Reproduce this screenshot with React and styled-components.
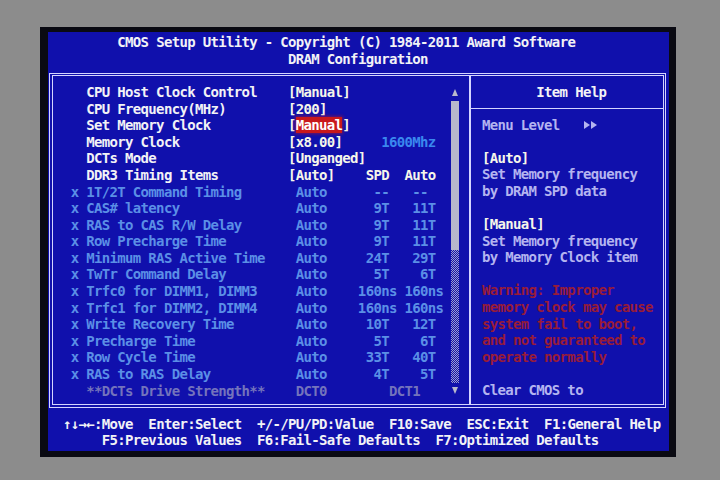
import React from 'react';
import styled, { createGlobalStyle } from 'styled-components';

const CW = 7.76;
const RH = 16.58;
const px = (n) => `${n.toFixed(2)}px`;
const cols = (n) => px(n * CW);
const colX = (n) => px(n * CW - 0.5);

const C = {
  page: '#8c8c8c',
  bezel: '#0a0a12',
  blue: '#1010ac',
  line: '#d4d4ff',
  white: '#f2f2f6',
  value: '#f6f6ea',
  off: '#5b8fe6',
  hint: '#3a88ee',
  dim: '#7474bc',
  help: '#b4b4f0',
  warn: '#981c38',
  sel: '#c8181c',
  thumb: '#b8b8cc',
};

const tones = {
  main: C.white,
  off: C.off,
  dim: C.dim,
  help: C.help,
  bright: C.value,
  warn: C.warn,
};

const Global = createGlobalStyle`
  html, body { margin: 0; padding: 0; background: ${C.page}; }
  body { width: 720px; height: 480px; overflow: hidden; }
`;

const Page = styled.div`
  width: 720px;
  height: 480px;
  box-sizing: border-box;
  padding: 27px 0 0 40px;
  background: ${C.page};
`;

const Bezel = styled.div`
  width: 636px;
  height: 430px;
  box-sizing: border-box;
  padding: 5px 7px 6px 8px;
  background: ${C.bezel};
`;

const Screen = styled.div`
  width: 621px;
  height: 419px;
  box-sizing: border-box;
  padding-top: 2.4px;
  background: ${C.blue};
  color: ${C.white};
  font-family: "DejaVu Sans Mono", "Liberation Mono", monospace;
  font-weight: bold;
  font-size: 14px;
  letter-spacing: -0.669px;
  overflow: hidden;
`;

const TextLine = styled.div`
  height: ${px(RH)};
  line-height: ${px(RH)};
  white-space: pre;
  padding-left: ${(p) => colX(p.$col)};
  color: ${(p) => tones[p.$tone || 'main']};
`;

const Frame = styled.div`
  margin: 5.14px 0 0 1.3px;
  width: 616.5px;
  box-sizing: border-box;
  border: 1px solid ${C.line};
  padding: 1.3px;
`;

const FrameInner = styled.div`
  display: flex;
  border: 1px solid ${C.line};
`;

const List = styled.div`
  width: 398.42px;
  box-sizing: border-box;
  padding: 8.14px 0 5.14px 18.18px;
`;

const Row = styled.div`
  display: flex;
  height: ${px(RH)};
  line-height: ${px(RH)};
  white-space: pre;
  color: ${(p) => tones[p.$tone]};
`;

const Marker = styled.span`
  width: ${cols(2)};
  flex: none;
`;

const Name = styled.span`
  width: ${cols(26)};
  flex: none;
`;

const Value = styled.span`
  color: ${(p) => (p.$tone === 'main' ? C.value : tones[p.$tone])};
`;

const Sel = styled.span`
  background: ${C.sel};
  color: #ffffff;
  box-shadow: 0 0 3px 1px rgba(200, 24, 28, 0.55);
`;

const Hint = styled.span`
  color: ${C.hint};
`;

const ScrollCol = styled.div`
  width: ${cols(1)};
  flex: none;
  margin-right: 10.22px;
  padding-top: 8.14px;
  display: flex;
  flex-direction: column;
`;

const ScrollArrow = styled.div`
  height: ${px(RH)};
  display: flex;
  align-items: center;
  justify-content: center;
  &::after {
    content: '';
    width: 0;
    height: 0;
    border-left: 3px solid transparent;
    border-right: 3px solid transparent;
    ${(p) =>
      p.$dir === 'up'
        ? `border-bottom: 7px solid ${C.thumb};`
        : `border-top: 7px solid ${C.thumb};`}
  }
`;

const Thumb = styled.div`
  height: ${px(RH * 9)};
  background: ${C.thumb};
`;

const Track = styled.div`
  height: ${px(RH * 8)};
  background: repeating-conic-gradient(#a0a0cc 0 25%, ${C.blue} 0 50%) 0 0 / 2px 2px;
`;

const HelpPanel = styled.div`
  flex: 1;
  border-left: 2px solid ${C.line};
  display: flex;
  flex-direction: column;
`;

const HelpHeader = styled.div`
  padding: 8.14px 0 7.6px 65.38px;
  height: ${px(RH)};
  line-height: ${px(RH)};
  border-bottom: 1.6px solid ${C.line};
  color: ${C.white};
  white-space: pre;
`;

const HelpBody = styled.div`
  padding: 7.4px 0 0 11.06px;
`;

const HelpLine = styled.div`
  display: flex;
  align-items: center;
  height: ${px(RH)};
  line-height: ${px(RH)};
  white-space: pre;
  color: ${(p) => tones[p.$tone]};
`;

const LevelIcon = styled.span`
  display: inline-flex;
  align-items: center;
  gap: 1px;
  margin-left: 1px;
  &::before,
  &::after {
    content: '';
    width: 0;
    height: 0;
    border-top: 4px solid transparent;
    border-bottom: 4px solid transparent;
    border-left: 6px solid ${C.help};
  }
`;

const Footer = styled.div`
  margin-top: 8.1px;
`;

const items = [
  { tone: 'main', name: 'CPU Host Clock Control', value: '[Manual]' },
  { tone: 'main', name: 'CPU Frequency(MHz)', value: '[200]' },
  { tone: 'main', name: 'Set Memory Clock', value: '[', sel: 'Manual', after: ']' },
  { tone: 'main', name: 'Memory Clock', value: '[x8.00]', hint: '     1600Mhz' },
  { tone: 'main', name: 'DCTs Mode', value: '[Unganged]' },
  { tone: 'main', name: 'DDR3 Timing Items', value: '[Auto]    SPD  Auto' },
  { tone: 'off', x: true, name: '1T/2T Command Timing', value: ' Auto      --   --' },
  { tone: 'off', x: true, name: 'CAS# latency', value: ' Auto      9T   11T' },
  { tone: 'off', x: true, name: 'RAS to CAS R/W Delay', value: ' Auto      9T   11T' },
  { tone: 'off', x: true, name: 'Row Precharge Time', value: ' Auto      9T   11T' },
  { tone: 'off', x: true, name: 'Minimum RAS Active Time', value: ' Auto     24T   29T' },
  { tone: 'off', x: true, name: 'TwTr Command Delay', value: ' Auto      5T    6T' },
  { tone: 'off', x: true, name: 'Trfc0 for DIMM1, DIMM3', value: ' Auto    160ns 160ns' },
  { tone: 'off', x: true, name: 'Trfc1 for DIMM2, DIMM4', value: ' Auto    160ns 160ns' },
  { tone: 'off', x: true, name: 'Write Recovery Time', value: ' Auto     10T   12T' },
  { tone: 'off', x: true, name: 'Precharge Time', value: ' Auto      5T    6T' },
  { tone: 'off', x: true, name: 'Row Cycle Time', value: ' Auto     33T   40T' },
  { tone: 'off', x: true, name: 'RAS to RAS Delay', value: ' Auto      4T    5T' },
  { tone: 'dim', name: '**DCTs Drive Strength**', value: ' DCT0        DCT1' },
];

const help = [
  { tone: 'help', text: 'Menu Level   ', icon: true },
  { tone: 'help', text: '' },
  { tone: 'bright', text: '[Auto]' },
  { tone: 'help', text: 'Set Memory frequency' },
  { tone: 'help', text: 'by DRAM SPD data' },
  { tone: 'help', text: '' },
  { tone: 'bright', text: '[Manual]' },
  { tone: 'help', text: 'Set Memory frequency' },
  { tone: 'help', text: 'by Memory Clock item' },
  { tone: 'help', text: '' },
  { tone: 'warn', text: 'Warning: Improper' },
  { tone: 'warn', text: 'memory clock may cause' },
  { tone: 'warn', text: 'system fail to boot,' },
  { tone: 'warn', text: 'and not guaranteed to' },
  { tone: 'warn', text: 'operate normally' },
  { tone: 'help', text: '' },
  { tone: 'help', text: 'Clear CMOS to' },
];

export default function App() {
  return (
    <>
      <Global />
      <Page>
        <Bezel>
          <Screen>
            <TextLine $col={9}>CMOS Setup Utility - Copyright (C) 1984-2011 Award Software</TextLine>
            <TextLine $col={31}>DRAM Configuration</TextLine>
            <Frame>
              <FrameInner>
                <List>
                  {items.map((it, i) => (
                    <Row key={i} $tone={it.tone}>
                      <Marker>{it.x ? 'x' : ''}</Marker>
                      <Name>{it.name}</Name>
                      <Value $tone={it.tone}>
                        {it.value}
                        {it.sel && <Sel>{it.sel}</Sel>}
                        {it.after}
                        {it.hint && <Hint>{it.hint}</Hint>}
                      </Value>
                    </Row>
                  ))}
                </List>
                <ScrollCol>
                  <ScrollArrow $dir="up" />
                  <Thumb />
                  <Track />
                  <ScrollArrow $dir="down" />
                </ScrollCol>
                <HelpPanel>
                  <HelpHeader>Item Help</HelpHeader>
                  <HelpBody>
                    {help.map((h, i) => (
                      <HelpLine key={i} $tone={h.tone}>
                        {h.text || ' '}
                        {h.icon && <LevelIcon />}
                      </HelpLine>
                    ))}
                  </HelpBody>
                </HelpPanel>
              </FrameInner>
            </Frame>
            <Footer>
              <TextLine $col={2}>{'\u2191\u2193\u2192\u2190:Move  Enter:Select  +/-/PU/PD:Value  F10:Save  ESC:Exit  F1:General Help'}</TextLine>
              <TextLine $col={7}>F5:Previous Values  F6:Fail-Safe Defaults  F7:Optimized Defaults</TextLine>
            </Footer>
          </Screen>
        </Bezel>
      </Page>
    </>
  );
}
